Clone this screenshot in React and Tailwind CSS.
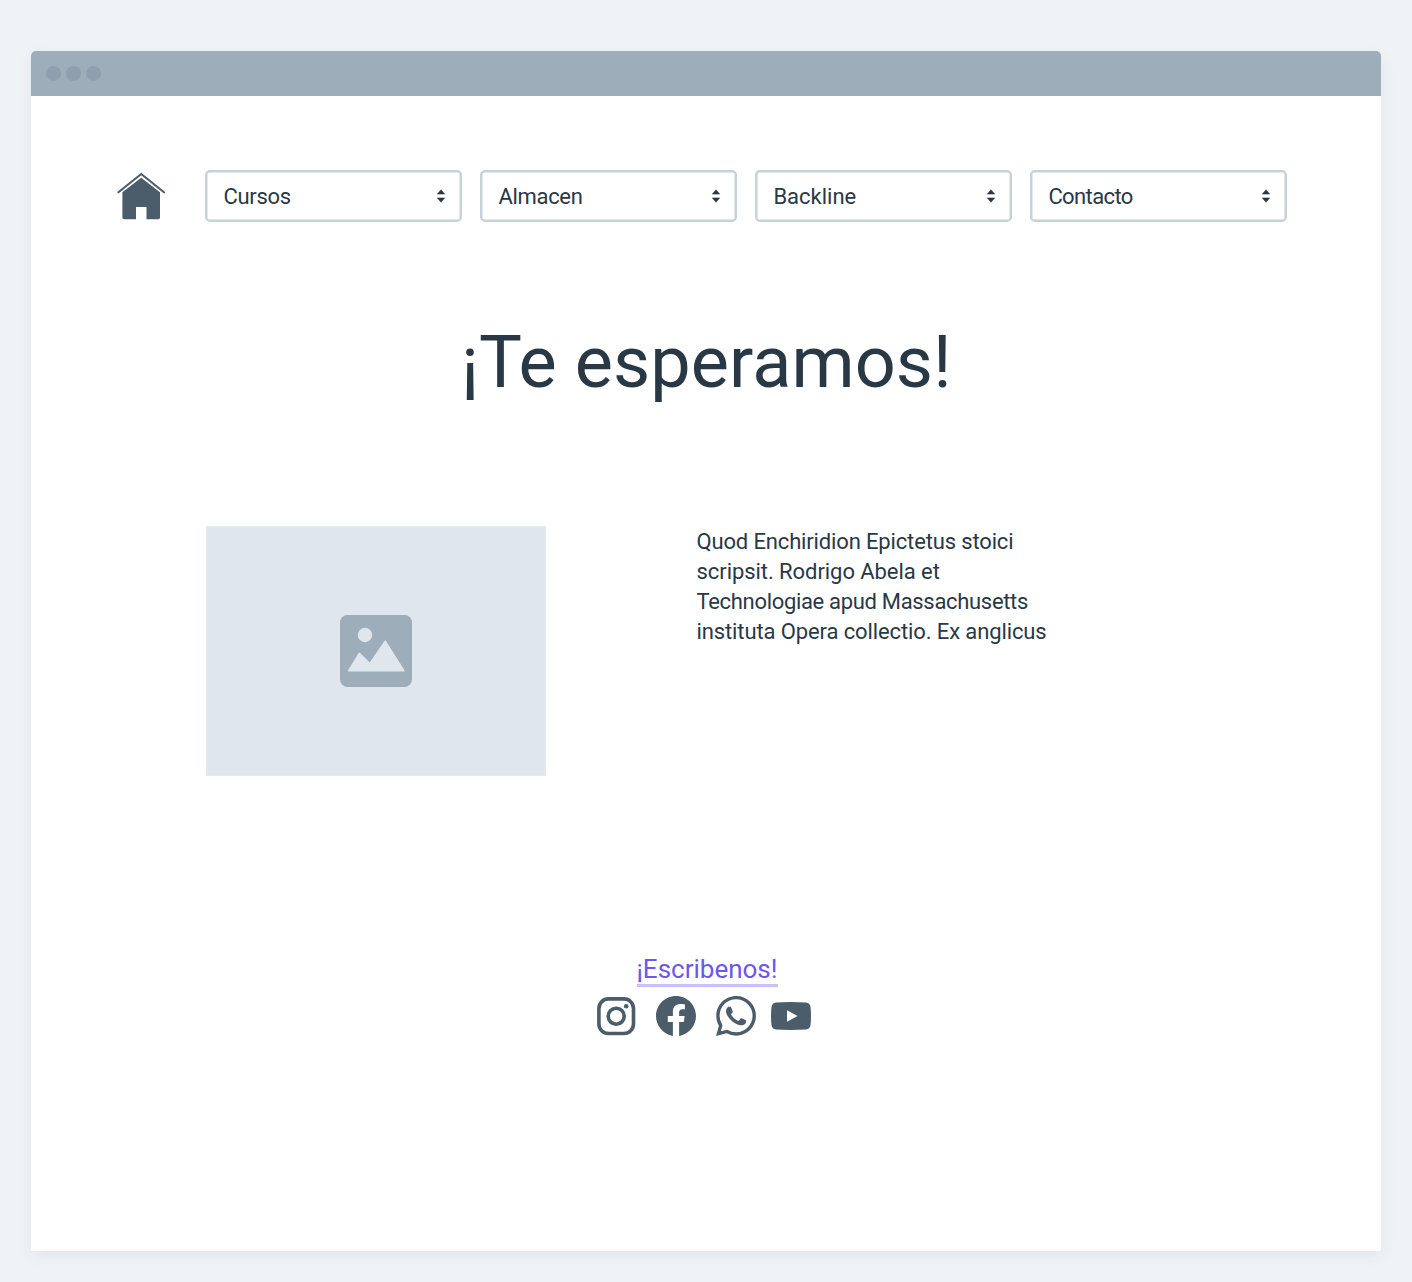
import { SiWhatsapp } from "react-icons/si";

const menus = [
  { label: "Cursos", spacing: "tracking-[-0.3px]" },
  { label: "Almacen", spacing: "tracking-[-0.3px]" },
  { label: "Backline", spacing: "tracking-[0px]" },
  { label: "Contacto", spacing: "tracking-[-0.6px]" },
];

const lines = [
  { text: "Quod Enchiridion Epictetus stoici", spacing: "tracking-[-0.15px]" },
  { text: "scripsit. Rodrigo Abela et", spacing: "tracking-[-0.06px]" },
  { text: "Technologiae apud Massachusetts", spacing: "tracking-[-0.32px]" },
  { text: "instituta Opera collectio. Ex anglicus", spacing: "tracking-[-0.11px]" },
];

function HomeIcon() {
  return (
    <svg className="h-[48px] w-[50px]" viewBox="0 0 50 48" fill="#4b5c6a">
      <path d="M2.4 20.3 25.2 2 48 20.3" fill="none" stroke="#4b5c6a" strokeWidth="2.1" strokeLinecap="round" />
      <path d="M6.4 20.3 25.2 5.8 44 20.3V45.5Q44 47.3 42.2 47.3H30.5V35H20V47.3H8.2Q6.4 47.3 6.4 45.5Z" />
    </svg>
  );
}

function Select({ label, spacing }) {
  return (
    <div className="flex h-[52px] w-[257px] items-center justify-between rounded-[5px] border-2 border-[#c7d1da] pl-[16px] pr-[14.5px] shadow-[inset_0_0_0_0.5px_#c7d1da]">
      <span className={`pt-[2px] text-[22px] leading-[30px] ${spacing}`}>{label}</span>
      <svg className="mb-[1px] h-[14px] w-[10px]" viewBox="0 0 10 14" fill="#293845">
        <path d="M5 .7 8.7 5.1H1.3ZM1.3 8.9H8.7L5 13.3Z" stroke="#293845" strokeWidth=".5" strokeLinejoin="round" />
      </svg>
    </div>
  );
}

export default function App() {
  return (
    <div className="h-[1282px] w-[1412px] bg-[#eff3f6] pl-[31px] pt-[51px] font-['Roboto',sans-serif] text-[#293845]">
      <div className="h-[1200px] w-[1350px] overflow-hidden rounded-t-[5px] bg-white shadow-[0_5px_15px_rgba(41,56,69,0.07)]">
        <div className="flex h-[45px] items-center gap-[5px] bg-[#9eadba] pl-[15px]">
          <div className="size-[15px] rounded-full bg-[#8f9fae]" />
          <div className="size-[15px] rounded-full bg-[#8f9fae]" />
          <div className="size-[15px] rounded-full bg-[#8f9fae]" />
        </div>
        <nav className="flex h-[126px] items-center pl-[85px] pt-[74px]">
          <HomeIcon />
          <div className="ml-[39.4px] flex gap-[18px]">
            {menus.map((m) => <Select key={m.label} {...m} />)}
          </div>
        </nav>
        <h1 className="mt-[93px] pl-px text-center text-[72px] leading-[96px] tracking-[0.1px]">¡Te esperamos!</h1>
        <div className="mt-[115px] flex pl-[175px]">
          <div className="flex h-[250px] w-[340px] items-center justify-center border border-[#e5eaee] bg-[#dfe6ed]">
            <svg className="size-[72px]" viewBox="0 0 72 72">
              <rect width="72" height="72" rx="7.5" fill="#9eadba" />
              <circle cx="25" cy="20" r="7.2" fill="#dfe6ed" />
              <path d="M8.5 55.8 19.3 38.4 29.8 48.6 45.2 26.2 64 55.8Z" fill="#dfe6ed" stroke="#dfe6ed" strokeWidth="1.5" strokeLinejoin="round" />
            </svg>
          </div>
          <div className="ml-[150.5px] pt-px text-[22px] leading-[30px]">
            {lines.map((l) => <p key={l.text} className={l.spacing}>{l.text}</p>)}
          </div>
        </div>
        <div className="mt-[176px] flex flex-col items-center pl-[2px]">
          <a className="flex h-[34.5px] w-[141px] justify-center whitespace-nowrap border-b-[3px] border-[#c8c1fb] text-[26px] leading-[34px] text-[#6b57ee]">¡Escribenos!</a>
        </div>
        <div className="mt-[9.5px] flex items-center pl-[565px] text-[#4b5c6a]">
          <svg className="size-[40px]" viewBox="0 0 40 40" fill="none" stroke="currentColor">
            <rect x="2.9" y="2.9" width="34.6" height="34.6" rx="9.5" strokeWidth="3.6" />
            <circle cx="20.2" cy="20.2" r="8" strokeWidth="3.6" />
            <circle cx="30.2" cy="10.3" r="2.3" fill="currentColor" stroke="none" />
          </svg>
          <svg className="ml-[20px] size-[40px]" viewBox="0 0 24 24" fill="currentColor">
            <path d="M24 12.073c0-6.627-5.373-12-12-12s-12 5.373-12 12c0 5.99 4.388 10.954 10.125 11.854v-8.385H7.078v-3.47h3.047V9.43c0-3.007 1.792-4.669 4.533-4.669 1.312 0 2.686.235 2.686.235v2.953H15.83c-1.491 0-1.956.925-1.956 1.874v2.25h3.328l-.532 3.47h-2.796v8.385C19.612 23.027 24 18.062 24 12.073z" />
          </svg>
          <SiWhatsapp className="ml-[20px] size-[40px]" />
          <svg className="ml-[15px] h-[28px] w-[40px]" viewBox="0 0 40 28">
            <path d="M5 .5Q20-.3 35 .5Q39 .8 39.5 5Q40.5 14 39.5 23Q39 27.2 35 27.5Q20 28.3 5 27.5Q1 27.2.5 23Q-.5 14 .5 5Q1 .8 5 .5Z" fill="currentColor" />
            <path d="M16 8.3V19.7L26.5 14Z" fill="white" />
          </svg>
        </div>
      </div>
    </div>
  );
}
